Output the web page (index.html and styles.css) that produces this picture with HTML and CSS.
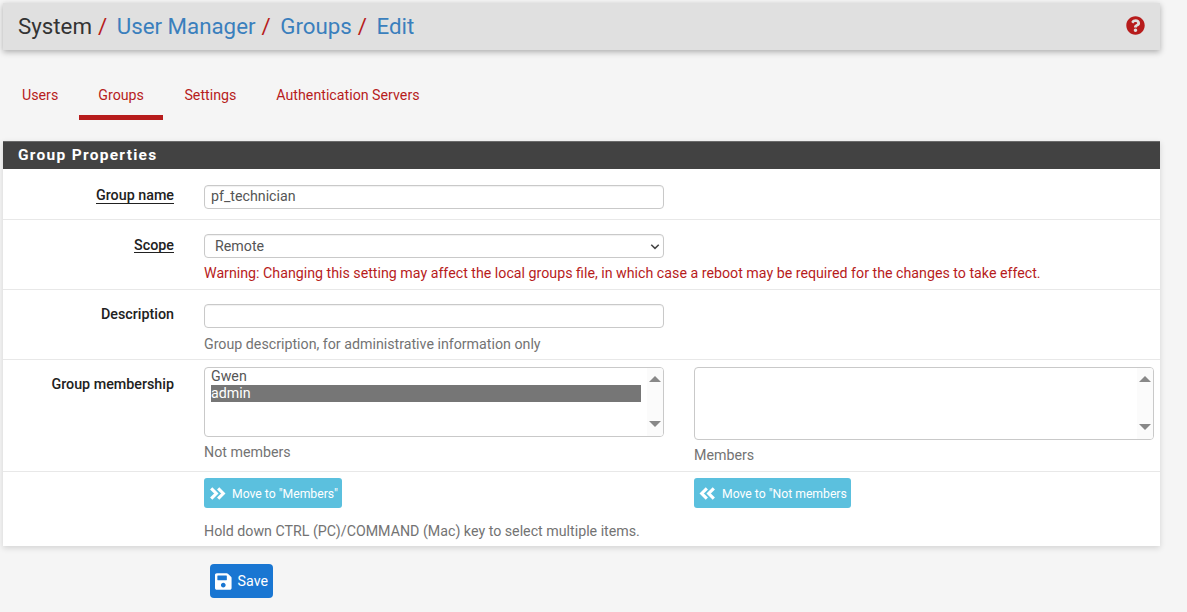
FILE: index.html
```html
<!DOCTYPE html>
<html lang="en">
<head>
<meta charset="utf-8">
<title>System / User Manager / Groups / Edit</title>
<link rel="stylesheet" href="styles.css">
</head>
<body>
<div class="page">
  <header class="crumbs">
    <h1 class="crumb-list">
      <span class="crumb-plain">System</span><span class="sep">/</span>
      <a class="crumb-link">User Manager</a><span class="sep">/</span>
      <a class="crumb-link">Groups</a><span class="sep">/</span>
      <a class="crumb-link">Edit</a>
    </h1>
    <svg class="help" viewBox="0 0 512 512" aria-hidden="true"><path fill="#b71c1c" d="M504 256c0 137-111 248-248 248S8 393 8 256 119 8 256 8s248 111 248 248zM262.700 90c-54.500 0-89.300 23-116.600 63.800-3.500 5.300-2.400 12.400 2.700 16.300l34.700 26.300c5.200 3.900 12.600 3 16.700-2.100 17.900-22.600 30.100-35.700 57.200-35.700 20.400 0 45.600 13.100 45.600 32.900 0 14.900-12.300 22.600-32.400 33.900-23.500 13.200-54.500 29.600-54.500 70.600V300c0 6.600 5.400 12 12 12h56c6.600 0 12-5.400 12-12v-1.300c0-28.400 83-29.600 83-106.500C379 134.300 319 90 262.700 90zM256 338c-25.300 0-45.900 20.600-45.900 45.900 0 25.300 20.600 45.900 45.900 45.900s45.900-20.600 45.900-45.900c0-25.300-20.600-45.900-45.900-45.900z"/></svg>
  </header>

  <nav class="tabs">
    <a class="tab">Users</a>
    <a class="tab tab-active">Groups</a>
    <a class="tab">Settings</a>
    <a class="tab">Authentication Servers</a>
  </nav>

  <section class="panel">
    <h2 class="panel-title">Group Properties</h2>

    <div class="row row-name">
      <label class="row-label underlined">Group name</label>
      <div class="row-body">
        <input class="field" type="text" value="pf_technician">
      </div>
    </div>

    <div class="row row-scope">
      <label class="row-label underlined">Scope</label>
      <div class="row-body">
        <div class="field field-select">Remote
          <svg class="chev" viewBox="0 0 12 8" aria-hidden="true"><path d="M1.500 1.800 6 6.200l4.500-4.400" fill="none" stroke="#444" stroke-width="1.800"/></svg>
        </div>
        <p class="warning">Warning: Changing this setting may affect the local groups file, in which case a reboot may be required for the changes to take effect.</p>
      </div>
    </div>

    <div class="row row-desc">
      <label class="row-label">Description</label>
      <div class="row-body">
        <input class="field" type="text">
        <p class="hint">Group description, for administrative information only</p>
      </div>
    </div>

    <div class="row row-members">
      <label class="row-label">Group membership</label>
      <div class="row-body two-col">
        <div class="col">
          <div class="listbox listbox-short">
            <ul class="options">
              <li>Gwen</li>
              <li class="selected">admin</li>
            </ul>
            <div class="scroll"><i class="arrow-up"></i><i class="arrow-down"></i></div>
          </div>
          <p class="hint hint-notmembers">Not members</p>
        </div>
        <div class="col">
          <div class="listbox listbox-tall">
            <ul class="options"></ul>
            <div class="scroll"><i class="arrow-up"></i><i class="arrow-down"></i></div>
          </div>
          <p class="hint hint-members">Members</p>
        </div>
      </div>
    </div>

    <div class="row row-actions">
      <div class="row-label"></div>
      <div class="row-body">
        <div class="two-col">
          <div class="col">
            <button class="btn-info" type="button">
              <svg class="btn-icon" viewBox="0 0 18 14" aria-hidden="true"><path d="M2.200 1.500 7.700 7l-5.500 5.500M9.700 1.500 15.200 7l-5.500 5.500" fill="none" stroke="#fff" stroke-width="3.400"/></svg>
              Move to "Members"
            </button>
          </div>
          <div class="col">
            <button class="btn-info" type="button">
              <svg class="btn-icon" viewBox="0 0 18 14" aria-hidden="true"><path d="M8.300 1.500 2.800 7l5.500 5.500M15.800 1.500 10.300 7l5.500 5.500" fill="none" stroke="#fff" stroke-width="3.400"/></svg>
              Move to "Not members
            </button>
          </div>
        </div>
        <p class="hint hint-hold">Hold down CTRL (PC)/COMMAND (Mac) key to select multiple items.</p>
      </div>
    </div>
  </section>

  <div class="save-bar">
    <button class="btn-save" type="button">
      <svg class="save-icon" viewBox="0 0 448 512" aria-hidden="true"><path fill="#fff" d="M433.900 129.900l-83.900-83.900A48 48 0 0 0 316.100 32H48C21.500 32 0 53.500 0 80v352c0 26.500 21.500 48 48 48h352c26.500 0 48-21.500 48-48V163.900a48 48 0 0 0-14.100-34zM224 416c-35.300 0-64-28.700-64-64 0-35.300 28.700-64 64-64s64 28.700 64 64c0 35.300-28.700 64-64 64zm96-304.500V212c0 6.600-5.400 12-12 12H76c-6.600 0-12-5.400-12-12V108c0-6.600 5.400-12 12-12h228.500c3.200 0 6.200 1.300 8.500 3.500l3.500 3.500c2.200 2.200 3.500 5.300 3.500 8.500z"/></svg>
      Save
    </button>
  </div>
</div>
</body>
</html>
```

FILE: styles.css
```css
* { box-sizing: border-box; }

html, body {
  margin: 0;
  height: 100%;
  overflow: hidden;
}

body {
  background: #f5f5f5;
  font-family: Roboto, "Liberation Sans", sans-serif;
  font-size: 14.22px;
  color: #212121;
}

.page {
  width: 1160px;
  padding: 3px 0 0 3px;
}

.crumbs {
  display: flex;
  align-items: center;
  justify-content: space-between;
  height: 47px;
  padding: 0 15px;
  background: #e0e0e0;
  box-shadow: 0 2px 6px rgba(0, 0, 0, 0.3);
}

.crumb-list {
  margin: 0;
  font-size: 22.3px;
  font-weight: 400;
  line-height: 1;
  white-space: nowrap;
}

.crumb-plain { color: #333; }
.crumb-link { color: #3a7fbd; }
.sep { color: #b71c1c; margin: 0 4px 0 6px; }

.help {
  width: 19px;
  height: 19px;
  margin: 0 0 2px;
}

.tabs {
  display: flex;
  margin-top: 21px;
  margin-left: -3px;
  height: 49px;
}

.tab {
  height: 49px;
  line-height: 48px;
  font-size: 14.22px;
  color: #b71c1c;
  white-space: nowrap;
}

.tab:nth-child(1) { padding: 0 20.500px 0 22px; }
.tab:nth-child(2) { padding: 0 19px 0 19.500px; }
.tab:nth-child(3) { padding: 0 20px 0 21.500px; }
.tab:nth-child(4) { padding: 0 20px; }

.tab-active {
  border-bottom: 5px solid #b71c1c;
}

.panel {
  margin-top: 21px;
  background: #fff;
  box-shadow: 0 2px 6px rgba(0, 0, 0, 0.14);
}

.panel-title {
  margin: 0;
  height: 28px;
  padding: 0 15px;
  background: #424242;
  color: #fff;
  font-size: 15.500px;
  font-weight: 700;
  line-height: 26px;
  letter-spacing: 1.28px;
  border-top: 1px solid #6a6a6a;
}

.row {
  display: grid;
  grid-template-columns: 171px 1fr;
  column-gap: 30px;
  border-bottom: 1px solid #e8e8e8;
}

.row-name { height: 51px; padding-top: 16px; }
.row-scope { height: 70px; padding-top: 14px; }
.row-desc { height: 70px; padding-top: 14px; }
.row-members { height: 112px; padding-top: 7px; }
.row-actions { height: 74px; padding-top: 6px; border-bottom: 0; }

.row-label {
  text-align: right;
  font-size: 14.3px;
  font-weight: 500;
  line-height: 20px;
  color: #212121;
}

.row-members .row-label { padding-top: 7px; }

.underlined {
  justify-self: end;
  height: 19px;
  line-height: 21px;
  border-bottom: 1px solid #212121;
}

.row-scope .underlined { line-height: 23px; }

.row-body { min-width: 0; }

.field {
  display: block;
  width: 460px;
  height: 24px;
  padding: 0 6px 2px;
  background: #fff;
  border: 1px solid #c9c9c9;
  border-radius: 4px;
  box-shadow: inset 0 1px 1px rgba(0, 0, 0, 0.06);
  font: 400 14.22px/20px Roboto, "Liberation Sans", sans-serif;
  color: #555;
}

.field-select {
  display: flex;
  align-items: center;
  justify-content: space-between;
  padding: 0 3px 0 10px;
}

.chev { width: 10px; height: 7px; }

.warning {
  margin: 0;
  padding-top: 5px;
  font-size: 14.22px;
  line-height: 20px;
  color: #b71c1c;
  white-space: nowrap;
}

.hint {
  margin: 0;
  font-size: 14.22px;
  line-height: 20px;
  color: #737373;
  white-space: nowrap;
}

.row-desc .hint { padding-top: 6px; }
.hint-notmembers { padding-top: 5px; }
.hint-members { padding-top: 5px; }
.hint-hold { padding-top: 13px; }

.two-col {
  display: grid;
  grid-template-columns: 460px 460px;
  column-gap: 30px;
}

.listbox {
  display: flex;
  border: 1px solid #c9c9c9;
  border-radius: 4px;
  overflow: hidden;
  background: #fff;
}

.listbox-short { height: 70px; }
.listbox-tall { height: 73px; }

.options {
  flex: 1;
  margin: 0;
  padding: 0 6px;
  list-style: none;
  font-size: 14.22px;
  line-height: 17px;
  color: #555;
}

.selected {
  background: #767676;
  color: #fff;
}

.scroll {
  position: relative;
  width: 16px;
  background: #fbfbfb;
  flex: none;
}

.arrow-up, .arrow-down {
  position: absolute;
  left: 2px;
  width: 0;
  height: 0;
  border-left: 6px solid transparent;
  border-right: 6px solid transparent;
}

.arrow-up { top: 8px; border-bottom: 6px solid #888; }
.arrow-down { bottom: 9px; border-top: 6px solid #888; }

.btn-info {
  display: inline-flex;
  align-items: center;
  height: 30px;
  padding: 1px 4px 0 5px;
  background: #5bc0de;
  border: 0;
  border-radius: 3px;
  color: #fff;
  font: 400 12.200px/30px Roboto, "Liberation Sans", sans-serif;
  white-space: nowrap;
}

.btn-icon {
  width: 17px;
  height: 13px;
  margin: -1px 6px 0 0;
}

.save-bar {
  padding: 18px 0 0 207px;
}

.btn-save {
  display: inline-flex;
  align-items: center;
  width: 63px;
  height: 34px;
  padding: 0 5px;
  background: #1976d2;
  border: 0;
  border-radius: 4px;
  color: #fff;
  font: 400 14.22px/34px Roboto, "Liberation Sans", sans-serif;
}

.save-icon {
  width: 17px;
  height: 19px;
  margin-right: 6px;
}
```
